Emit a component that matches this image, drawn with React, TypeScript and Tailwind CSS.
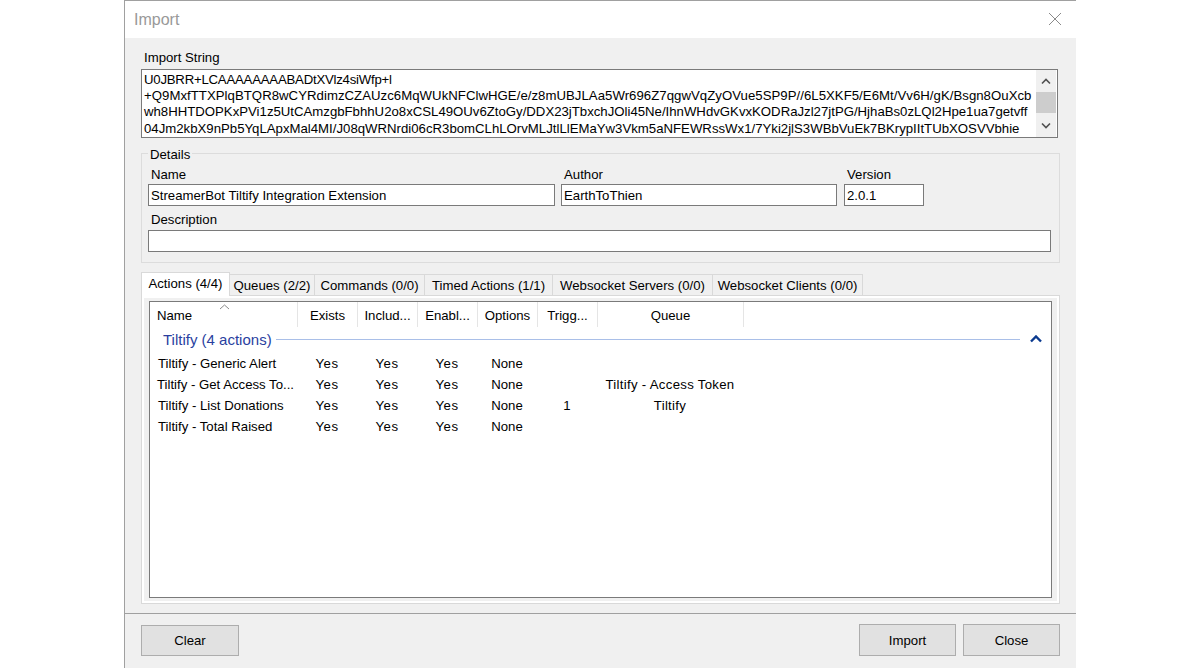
const importLines = [
  { text: 'U0JBRR+LCAAAAAAAABADtXVlz4siWfp+l', tracking: 'tracking-[-0.22px]' },
  { text: '+Q9MxfTTXPlqBTQR8wCYRdimzCZAUzc6MqWUkNFClwHGE/e/z8mUBJLAa5Wr696Z7qgwVqZyOVue5SP9P//6L5XKF5/E6Mt/Vv6H/gK/Bsgn8OuXcb', tracking: 'tracking-[0.035px]' },
  { text: 'wh8HHTDOPKxPVi1z5UtCAmzgbFbhhU2o8xCSL49OUv6ZtoGy/DDX23jTbxchJOli45Ne/IhnWHdvGKvxKODRaJzl27jtPG/HjhaBs0zLQl2Hpe1ua7getvff', tracking: 'tracking-[0px]' },
  { text: '04Jm2kbX9nPb5YqLApxMal4MI/J08qWRNrdi06cR3bomCLhLOrvMLJtlLlEMaYw3Vkm5aNFEWRssWx1/7Yki2jlS3WBbVuEk7BKrypIItTUbXOSVVbhie', tracking: 'tracking-[0.005px]' },
]

const tabs = [
  { label: 'Queues (2/2)', width: 'w-[85px]' },
  { label: 'Commands (0/0)', width: 'w-[110px]' },
  { label: 'Timed Actions (1/1)', width: 'w-[128px]' },
  { label: 'Websocket Servers (0/0)', width: 'w-[160px]' },
  { label: 'Websocket Clients (0/0)', width: 'w-[150px]' },
]

const columns = [
  { label: 'Exists', width: 'w-[60px]' },
  { label: 'Includ...', width: 'w-[60px]' },
  { label: 'Enabl...', width: 'w-[60px]' },
  { label: 'Options', width: 'w-[60px]' },
  { label: 'Trigg...', width: 'w-[60px]' },
  { label: 'Queue', width: 'w-[146px]' },
]

const rows = [
  { name: 'Tiltify - Generic Alert', pad: 'pl-[8px]', trigger: '', queue: '' },
  { name: 'Tiltify - Get Access To...', pad: 'pl-[7px]', trigger: '', queue: 'Tiltify - Access Token' },
  { name: 'Tiltify - List Donations', pad: 'pl-[8px]', trigger: '1', queue: 'Tiltify' },
  { name: 'Tiltify - Total Raised', pad: 'pl-[8px]', trigger: '', queue: '' },
]

function Field({ label, value, width, leading }: { label: string; value: string; width: string; leading: string }) {
  return (
    <div className={`flex flex-col ${width}`}>
      <span className={`h-[18px] pl-[3px] ${leading}`}>{label}</span>
      <div className="h-[22px] border border-[#7a7a7a] bg-white pl-[2px] leading-[22px]">{value}</div>
    </div>
  )
}

function Cell({ text, width, extra = '' }: { text: string; width: string; extra?: string }) {
  return <div className={`${width} shrink-0 text-center ${extra}`}>{text}</div>
}

export default function App() {
  return (
    <div className="h-[668px] w-[1200px] overflow-hidden bg-white font-['Liberation_Sans',Arial,sans-serif] text-[13.2px] text-black">
      <div className="mx-auto flex h-[668px] w-[952px] flex-col border-t border-l border-[#a0a0a0] bg-[#f0f0f0]">
        {/* Title bar */}
        <div className="flex h-[37px] shrink-0 items-center justify-between bg-white pr-[14px] pl-[9px]">
          <span className="text-[16px] text-[#999999]">Import</span>
          <svg className="mb-[1px]" width="14" height="14" viewBox="0 0 14 14" fill="none" stroke="#8a8a8a" strokeWidth="1">
            <path d="M1 1l12 12M13 1L1 13" />
          </svg>
        </div>

        {/* Body */}
        <div className="flex flex-1 flex-col px-[16px]">
          <div className="h-[31px] pt-[11px] pl-[3px] leading-[18px]">Import String</div>

          <div className="flex h-[69px] w-[917px] border border-[#7a7a7a] bg-white pr-[1px]">
            <div className="min-w-0 flex-1 overflow-hidden pt-[2px] pl-[2px] leading-[16.2px] whitespace-nowrap">
              {importLines.map((line) => (
                <div key={line.text} className={line.tracking}>{line.text}</div>
              ))}
            </div>
            <div className="flex w-[20px] shrink-0 flex-col bg-[#f0f0f0]">
              <div className="flex h-[22px] items-center justify-center">
                <svg width="10" height="7" viewBox="0 0 10 7" fill="none" stroke="#505050" strokeWidth="1.6">
                  <path d="M1 5.5l4-4 4 4" />
                </svg>
              </div>
              <div className="h-[21px] bg-[#cdcdcd]" />
              <div className="flex flex-1 items-center justify-center">
                <svg width="10" height="7" viewBox="0 0 10 7" fill="none" stroke="#505050" strokeWidth="1.6">
                  <path d="M1 1.5l4 4 4-4" />
                </svg>
              </div>
            </div>
          </div>

          {/* Details group */}
          <div className="relative mt-[15px] flex h-[110px] w-[919px] flex-col border border-[#dcdcdc] px-[6px] pt-[12px]">
            <span className="absolute -top-[7px] left-[6px] bg-[#f0f0f0] px-[2px] leading-[16px]">Details</span>
            <div className="flex">
              <Field label="Name" value="StreamerBot Tiltify Integration Extension" width="w-[407px]" leading="leading-[17px]" />
              <div className="ml-[6px]">
                <Field label="Author" value="EarthToThien" width="w-[276px]" leading="leading-[17px]" />
              </div>
              <div className="ml-[7px]">
                <Field label="Version" value="2.0.1" width="w-[80px]" leading="leading-[17px]" />
              </div>
            </div>
            <div className="mt-[6px]">
              <Field label="Description" value="" width="w-[903px]" leading="leading-[15px]" />
            </div>
          </div>

          {/* Tabs */}
          <div className="mt-[9px] flex h-[23px] w-[919px] items-end">
            <div className="z-10 -mb-px flex h-[24px] w-[89px] items-center justify-center border border-b-0 border-[#d9d9d9] bg-white pb-[2px]">
              Actions (4/4)
            </div>
            {tabs.map((tab) => (
              <div
                key={tab.label}
                className={`flex h-[21px] items-center justify-center border-t border-r border-[#d9d9d9] pt-[1px] ${tab.width}`}
              >
                {tab.label}
              </div>
            ))}
          </div>

          {/* List panel */}
          <div className="h-[309px] w-[919px] border border-[#d9d9d9] bg-white p-[2px]">
            <div className="h-full bg-[#f0f0f0] px-[5px] py-[3px]">
              <div className="relative h-[297px] w-[903px] border border-[#7a7a7a] bg-white">
                <svg className="absolute top-[2px] left-[69px]" width="11" height="6" viewBox="0 0 11 6" fill="none" stroke="#8a8a8a">
                  <path d="M1 5l4.5-4 4.5 4" />
                </svg>
                <div className="flex h-[25px] items-center">
                  <div className="h-[25px] w-[148px] shrink-0 border-r border-[#e5e5e5] pl-[7px] leading-[28px]">Name</div>
                  {columns.map((col) => (
                    <div
                      key={col.label}
                      className={`h-[25px] shrink-0 border-r border-[#e5e5e5] text-center leading-[28px] ${col.width}`}
                    >
                      {col.label}
                    </div>
                  ))}
                </div>
                <div className="flex h-[25px] items-center pr-[9px] pl-[13px]">
                  <span className="pt-[2px] text-[15px] text-[#2a3f9f]">Tiltify (4 actions)</span>
                  <div className="mx-[4px] h-px flex-1 bg-[#a9bfe8]" />
                  <svg className="mb-[2px] ml-[6px]" width="12" height="8" viewBox="0 0 12 8" fill="none" stroke="#0b3a8f" strokeWidth="2.4">
                    <path d="M1 6.5l5-5 5 5" />
                  </svg>
                </div>
                <div className="pt-[1px]">
                  {rows.map((row) => (
                    <div key={row.name} className="flex h-[21px] items-center">
                      <div className={`w-[147px] shrink-0 whitespace-nowrap ${row.pad}`}>{row.name}</div>
                      <Cell text="Yes" width="w-[60px]" extra="tracking-[0.5px]" />
                      <Cell text="Yes" width="w-[60px]" extra="tracking-[0.5px]" />
                      <Cell text="Yes" width="w-[60px]" extra="tracking-[0.5px]" />
                      <Cell text="None" width="w-[60px]" />
                      <Cell text={row.trigger} width="w-[60px]" />
                      <Cell text={row.queue} width="w-[146px]" extra="tracking-[0.3px]" />
                    </div>
                  ))}
                </div>
              </div>
            </div>
          </div>
        </div>

        {/* Footer */}
        <div className="mt-[8px] flex h-[55px] shrink-0 items-start justify-between border-t border-[#a0a0a0] px-[16px] pt-[10px]">
          <button className="mt-[1px] h-[31px] w-[98px] border border-[#adadad] bg-[#e1e1e1] pt-[1px]">Clear</button>
          <div className="flex gap-[7px]">
            <button className="h-[32px] w-[97px] border border-[#adadad] bg-[#e1e1e1] pt-[1px]">Import</button>
            <button className="h-[32px] w-[97px] border border-[#adadad] bg-[#e1e1e1] pt-[1px]">Close</button>
          </div>
        </div>
      </div>
    </div>
  )
}
